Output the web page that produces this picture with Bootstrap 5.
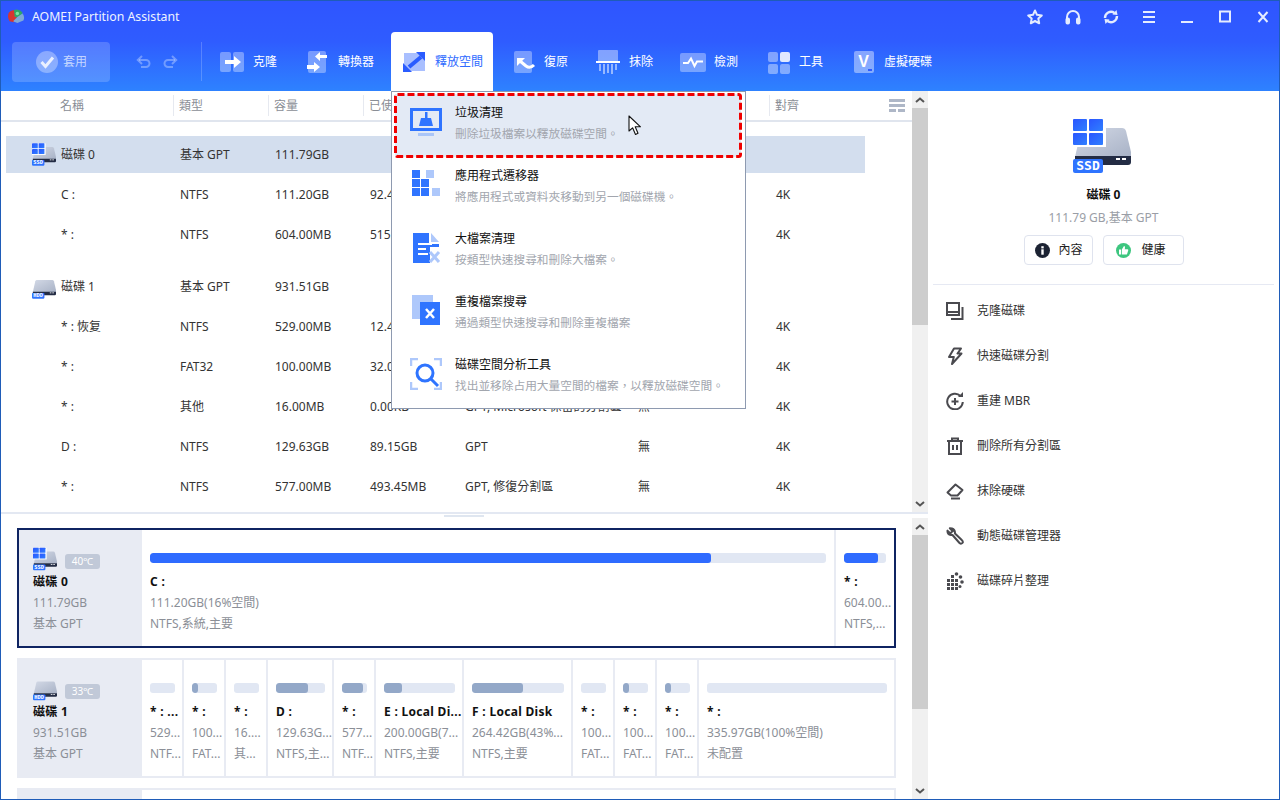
<!DOCTYPE html>
<html lang="zh-Hant">
<head>
<meta charset="utf-8">
<title>AOMEI Partition Assistant</title>
<link rel="stylesheet" href="https://cdn.jsdelivr.net/npm/bootstrap@5.3.0/dist/css/bootstrap.min.css">
<style>
html,body{margin:0;width:1280px;height:800px;overflow:hidden;background:#fff}
body{font-family:"Noto Sans","Noto Sans CJK TC",sans-serif;font-size:12px;line-height:20px;color:#333}
svg{display:block;flex:none}
.win{width:1280px;height:800px;border:1px solid #1f5cb8;overflow:hidden;position:relative}
.head{height:90px;background:linear-gradient(180deg,#2f55ff 0%,#2f5cff 45%,#2e82ff 100%);color:#fff}
.titlebar{height:31px}
.applogo{margin-left:6px}
.apptitle{margin-left:6px;color:#eef3ff;font-size:12.3px}
.winbtns{gap:20px;padding-right:7px}
.toolbar{height:59px}
.applybtn{width:98px;height:40px;margin-left:11px;background:rgba(255,255,255,.18);border-radius:4px;padding-left:24px;color:rgba(255,255,255,.68);gap:5px}
.undo{margin-left:26px;gap:12px}
.vsep{width:1px;height:39px;margin-left:23px;margin-right:18px;background:rgba(255,255,255,.2)}
.titem{height:100%;white-space:nowrap;color:#fff}
.w86{width:86px}.w85{width:85px}.w82{width:82px}.w84{width:84px}.w88{width:88px}
.tabon{width:102px;padding-left:11px;background:#fff;color:#2f6bff;border-radius:4px 4px 0 0;margin-right:21px}
.mainwrap{height:708px}
.leftcol{width:927px}
.toppane{height:423px;border-bottom:2px solid #e3e8f2}
.tablearea{width:911px;overflow:hidden}
.thead-row,.trow{display:grid;grid-template-columns:172px 95px 95px 95px 173px 138px 95px}
.thead-row{height:31px;border-bottom:2px solid #e0e5ee;margin-bottom:14px;color:#8a8e96;width:911px;grid-template-columns:172px 95px 95px 95px 173px 138px 95px 48px}
.thead-row>div{height:21px;margin-top:4px;border-left:1px solid #e6e9f0;padding-left:5px;white-space:nowrap;line-height:21px}
.thead-row>div:first-child{border-left:0;padding-left:59px}
.thead-row>div.tblicon{border-left:0;padding-left:25px}
.trow{height:40px;align-items:center}
.trow>div{padding-left:7px;white-space:nowrap}
.trow>div:first-child{padding-left:60px}
.trow.diskrow>div:first-child{padding-left:31px;display:flex;align-items:center;gap:5px}
.trow.sel{height:37px;margin-bottom:2px;margin-left:5px;width:859px;background:#d3deee;grid-template-columns:167px 95px 95px 95px 173px 138px 95px}
.trow.sel>div:first-child{padding-left:26px}
.gaptop{margin-top:12px}
.sbar{width:16px;background:#f0f0f0}
.sbar .arr{height:17px}
.sbar .thumb{background:#cdcdcd}
.th1{height:217px}
.th2{height:174px}
.grabber{width:40px;height:2px;margin:1px 0 11px 443px;background:#dfe6f0}
.bottompane{height:285px}
.disklist{width:911px;overflow:hidden;height:285px}
.dk{width:879px;height:120px;margin:0 0 10px 16px;border:2px solid #e8ebf3;background:#e8ebf3;gap:2px}
.dk.cur-disk{border-color:#0f2462}
.dkleft{width:121px;flex:none;padding:17px 0 0 14px;line-height:21px;color:#8b8f97}
.dkname{font-weight:700;color:#111;letter-spacing:.3px}
.tempb{width:35px;height:15px;margin:7px 0 0 8px;background:#c1c9d8;color:#fff;border-radius:3px;font-size:10px;line-height:15px;text-align:center}
.pcell{background:#fff;padding:23px 0 0 8px;line-height:21px;color:#8b8f97;min-width:0;flex:none;white-space:nowrap;overflow:hidden}
.pbar{height:10px;margin:0 7px 8px 0;background:#e1e7f3;border-radius:3px;overflow:hidden}
.cur-disk .pbar{margin-right:8px}
.pfill{height:100%;background:#93a8c8;border-radius:3px}
.cur-disk .pfill{background:#2f6bff}
.pname{font-weight:700;color:#111;letter-spacing:.3px}
.sidepanel{width:351px}
.bigicon{margin:28px 0 0 145px}
.sname{margin-top:12px;font-weight:700;color:#111;text-align:center}
.ssub{margin-top:3px;color:#9a9ea6;text-align:center}
.sbtns{margin-top:7px;gap:10px}
.sbtn{height:30px;padding:0 0 0 10px;display:flex;align-items:center;gap:9px;font-size:12px;color:#222;background:#fff;border:1px solid #dfe3ee;border-radius:4px}
.sbtn.a{width:69px}
.sbtn.b{width:81px;padding-left:12px;gap:11px}
.sline{height:1px;margin:19px 5px 3px;background:#e6e9f3}
.actions .list-group-item{height:45px;padding:0 0 0 18px;display:flex;align-items:center;gap:13px;border:0;background:transparent;color:#333;font-size:12px}
.popmenu{top:90px;left:390px;width:355px;height:318px;min-width:0;padding:2px 0 0;margin:0;border:1px solid #8e9ab0;border-radius:0;background:#fff;z-index:5;font-size:12px}
.popmenu .dropdown-item{height:63px;width:346px;margin-left:3px;padding:9px 0 0 15px;gap:13px;position:relative;color:#111;white-space:nowrap}
.popmenu .dropdown-item.picked{background:#e3eaf5}
.popmenu svg.mi{margin-top:3px}
.msub{color:#a2a6ae;font-size:11.7px}
.dash{position:absolute;left:-1px;top:-1px}
.cursorpic{position:absolute;left:627px;top:114px;z-index:6}
</style>
</head>
<body>
<svg width="0" height="0" class="position-absolute">
<defs>
<linearGradient id="bodyg" x1="0" y1="0" x2="1" y2="1"><stop offset="0" stop-color="#d3d9e6"/><stop offset="1" stop-color="#a8b2c6"/></linearGradient>
<linearGradient id="wing" x1="0" y1="0" x2="1" y2="1"><stop offset="0" stop-color="#2a55ff"/><stop offset="1" stop-color="#2f80ff"/></linearGradient>
<symbol id="ssd" viewBox="0 0 58 54">
<path d="M2 38 8 12Q9 9 12 9H49Q52 9 53 12L58 33V38Z" fill="url(#bodyg)"/>
<path d="M2 37H58V43Q58 46 55 46H2Z" fill="#232c44"/>
<rect x="43" y="39" width="4" height="2" fill="#fff"/><rect x="49" y="39" width="4" height="2" fill="#fff"/>
<rect width="33" height="28" fill="#fff"/>
<rect width="14" height="12" rx="1" fill="url(#wing)"/><rect x="16" width="14" height="12" rx="1" fill="url(#wing)"/>
<rect y="14" width="14" height="12" rx="1" fill="url(#wing)"/><rect x="16" y="14" width="14" height="12" rx="1" fill="url(#wing)"/>
<rect y="40" width="30" height="14" rx="2" fill="#2f74ff"/>
<text x="15" y="51" text-anchor="middle" font-family="'DejaVu Sans Mono',monospace" font-weight="700" font-size="13" fill="#fff">SSD</text>
</symbol>
<symbol id="hdd" viewBox="0 0 58 54">
<path d="M2 38 8 12Q9 9 12 9H49Q52 9 53 12L58 33V38Z" fill="url(#bodyg)"/>
<path d="M2 37H58V43Q58 46 55 46H2Z" fill="#232c44"/>
<rect x="43" y="39" width="4" height="2" fill="#fff"/><rect x="49" y="39" width="4" height="2" fill="#fff"/>
<rect y="40" width="30" height="14" rx="2" fill="#2f74ff"/>
<text x="15" y="51" text-anchor="middle" font-family="'DejaVu Sans Mono',monospace" font-weight="700" font-size="13" fill="#fff">HDD</text>
</symbol>
</defs>
</svg>

<div class="win d-flex flex-column">
  <header class="head flex-none">
    <div class="titlebar d-flex align-items-center justify-content-between">
      <div class="d-flex align-items-center">
        <svg class="applogo" width="19" height="16" viewBox="0 0 22 18"><path d="M2 4Q5 0 10 1L12 8 8 15 3 14Q0 9 2 4Z" fill="#d8362f"/><path d="M8 1Q14-1 18 4L15 9 9 9Z" fill="#2fa866"/><path d="M12 9 18 5Q21 9 19 13L12 16 7 14Z" fill="#7fa9d8"/><circle cx="12" cy="5" r="2" fill="#7ee0a0"/></svg>
        <span class="apptitle">AOMEI Partition Assistant</span>
      </div>
      <div class="winbtns d-flex align-items-center">
        <svg width="18" height="18" viewBox="0 0 18 18" fill="none" stroke="#e4ecff" stroke-width="2" stroke-linejoin="round"><path d="M9 2.5 11 6.8 15.8 7.4 12.3 10.6 13.2 15.3 9 13 4.8 15.3 5.7 10.6 2.2 7.4 7 6.8Z"/></svg>
        <svg width="18" height="18" viewBox="0 0 18 18" fill="none" stroke="#e4ecff" stroke-width="2"><path d="M3 12V9a6 6 0 0 1 12 0v3"/><rect x="2.5" y="10.5" width="2.5" height="5" rx="1" fill="#e4ecff"/><rect x="13" y="10.5" width="2.5" height="5" rx="1" fill="#e4ecff"/></svg>
        <svg width="18" height="18" viewBox="0 0 18 18" fill="none" stroke="#e4ecff" stroke-width="2.4"><path d="M3 10a6 6 0 0 1 9.5-5"/><path d="M15 8a6 6 0 0 1-9.5 5"/><path d="M10.500 6.500 15.500 7 14.500 2Z" fill="#e4ecff" stroke="none"/><path d="M7.500 11.500 2.500 11 3.500 16Z" fill="#e4ecff" stroke="none"/></svg>
        <svg width="18" height="18" viewBox="0 0 18 18" stroke="#e4ecff" stroke-width="2"><path d="M3 4h12M3 9h12M3 14h12"/></svg>
        <svg width="18" height="18" viewBox="0 0 18 18" stroke="#e4ecff" stroke-width="2"><path d="M3 14h12"/></svg>
        <svg width="18" height="18" viewBox="0 0 18 18" fill="none" stroke="#e4ecff" stroke-width="2"><rect x="4" y="3.500" width="10" height="10"/></svg>
        <svg width="18" height="18" viewBox="0 0 18 18" stroke="#e4ecff" stroke-width="2"><path d="M4.500 4 13.500 14M13.500 4 4.500 14"/></svg>
      </div>
    </div>
    <div class="toolbar d-flex align-items-center">
      <div class="applybtn d-flex align-items-center">
        <svg width="22" height="22" viewBox="0 0 22 22"><circle cx="11" cy="11" r="11" fill="rgba(255,255,255,.32)"/><path d="M5.500 11 9.500 15.500 17 6.500" fill="none" stroke="#eaf0ff" stroke-width="3"/></svg>
        <span>套用</span>
      </div>
      <div class="undo d-flex align-items-center">
        <svg width="15" height="14" viewBox="0 0 15 14" fill="none" stroke="rgba(255,255,255,.32)" stroke-width="2"><path d="M3 5H10A3.500 3.500 0 0 1 10 12H5"/><path d="M6 1 1.800 5 6 9"/></svg>
        <svg width="15" height="14" viewBox="0 0 15 14" fill="none" stroke="rgba(255,255,255,.32)" stroke-width="2"><path d="M12 5H5A3.500 3.500 0 0 0 5 12H10"/><path d="M9 1 13.200 5 9 9"/></svg>
      </div>
      <div class="vsep"></div>

      <div class="titem w86 d-flex align-items-center">
        <svg width="33" height="24" viewBox="0 0 33 24"><rect y="2" width="11" height="20" rx="2" fill="rgba(255,255,255,.35)"/><rect x="13" y="2" width="11" height="20" rx="2" fill="rgba(255,255,255,.35)"/><path d="M5 10h9V6l7 6-7 6v-4H5z" fill="#fff"/></svg>
        <span>克隆</span>
      </div>
      <div class="titem w85 d-flex align-items-center">
        <svg width="32" height="24" viewBox="0 0 32 24"><rect x="2" y="1" width="18" height="22" rx="2" fill="rgba(255,255,255,.35)"/><path d="M21 5H14V2L9 6.500 14 11V8H21z" fill="#fff"/><path d="M1 15H8V12L14 17 8 22V19H1z" fill="#fff"/></svg>
        <span>轉換器</span>
      </div>
      <div class="titem tabon d-flex align-items-center">
        <svg width="33" height="24" viewBox="0 0 33 24"><path d="M2 3H23V21H2Z" fill="#a9bfff"/><path d="M7 17 19 7" stroke="#2a5cff" stroke-width="4"/><path d="M14 2h9v9z" fill="#2a5cff"/><path d="M1 13v9h9z" fill="#2a5cff"/></svg>
        <span>釋放空間</span>
      </div>
      <div class="titem w82 d-flex align-items-center">
        <svg width="30" height="24" viewBox="0 0 30 24"><rect y="1" width="18" height="22" rx="2" fill="rgba(255,255,255,.35)"/><path d="M3 8h8l-8 8z" fill="#fff"/><path d="M6 11 12 16Q16 19 20 15" fill="none" stroke="#fff" stroke-width="3"/></svg>
        <span>復原</span>
      </div>
      <div class="titem w84 d-flex align-items-center">
        <svg width="33" height="24" viewBox="0 0 33 24"><rect x="2" y="0" width="20" height="12" rx="1" fill="rgba(255,255,255,.4)"/><rect y="11" width="24" height="2" fill="#fff"/><path d="M4 14V21M8 14V24M12 14V23M16 14V24M20 14V20" stroke="rgba(255,255,255,.5)" stroke-width="2"/></svg>
        <span>抹除</span>
      </div>
      <div class="titem w88 d-flex align-items-center">
        <svg width="34" height="24" viewBox="0 0 34 24"><rect y="3" width="26" height="19" rx="2" fill="rgba(255,255,255,.35)"/><path d="M3 13H8L11 8.500 14.500 16 17 11.500H23" fill="none" stroke="#fff" stroke-width="2"/></svg>
        <span>檢測</span>
      </div>
      <div class="titem w86 d-flex align-items-center">
        <svg width="31" height="24" viewBox="0 0 31 24"><rect y="2" width="10" height="10" rx="2" fill="rgba(255,255,255,.4)"/><rect x="12" y="2" width="10" height="10" rx="2" fill="rgba(255,255,255,.85)"/><rect y="14" width="10" height="10" rx="2" fill="rgba(255,255,255,.4)"/><rect x="12" y="14" width="10" height="10" rx="2" fill="rgba(255,255,255,.4)"/></svg>
        <span>工具</span>
      </div>
      <div class="titem d-flex align-items-center">
        <svg width="30" height="24" viewBox="0 0 30 24"><rect y="1" width="20" height="22" rx="2" fill="rgba(255,255,255,.42)"/><text x="9.500" y="17" text-anchor="middle" font-family="'Liberation Sans',sans-serif" font-weight="700" font-size="16" fill="#fff">V</text><rect x="14" y="19" width="4" height="2" fill="#2f5cff"/></svg>
        <span>虛擬硬碟</span>
      </div>
    </div>
  </header>

  <div class="mainwrap d-flex">
    <div class="leftcol d-flex flex-column">
      <section class="toppane d-flex flex-none">
        <div class="tablearea flex-none">
          <div class="thead-row">
            <div>名稱</div><div>類型</div><div>容量</div><div>已使</div><div></div><div></div><div>對齊</div>
            <div class="tblicon d-flex align-items-center"><svg width="16" height="13" viewBox="0 0 16 13" fill="#aeb7c7"><rect width="16" height="3"/><rect y="5" width="16" height="3"/><rect y="10" width="7" height="3"/><rect x="9" y="10" width="7" height="3"/></svg></div>
          </div>
          <div class="trow diskrow sel"><div><svg width="24" height="23"><use href="#ssd"/></svg><span>磁碟 0</span></div><div>基本 GPT</div><div>111.79GB</div></div>
          <div class="trow"><div>C :</div><div>NTFS</div><div>111.20GB</div><div>92.45GB</div><div></div><div></div><div>4K</div></div>
          <div class="trow"><div>* :</div><div>NTFS</div><div>604.00MB</div><div>515.32MB</div><div></div><div></div><div>4K</div></div>
          <div class="trow diskrow gaptop"><div><svg width="24" height="23"><use href="#hdd"/></svg><span>磁碟 1</span></div><div>基本 GPT</div><div>931.51GB</div></div>
          <div class="trow"><div>* : 恢复</div><div>NTFS</div><div>529.00MB</div><div>12.40MB</div><div></div><div></div><div>4K</div></div>
          <div class="trow"><div>* :</div><div>FAT32</div><div>100.00MB</div><div>32.00MB</div><div></div><div></div><div>4K</div></div>
          <div class="trow"><div>* :</div><div>其他</div><div>16.00MB</div><div>0.00KB</div><div>GPT, Microsoft 保留的分割區</div><div>無</div><div>4K</div></div>
          <div class="trow"><div>D :</div><div>NTFS</div><div>129.63GB</div><div>89.15GB</div><div>GPT</div><div>無</div><div>4K</div></div>
          <div class="trow"><div>* :</div><div>NTFS</div><div>577.00MB</div><div>493.45MB</div><div>GPT, 修復分割區</div><div>無</div><div>4K</div></div>
        </div>
        <div class="sbar d-flex flex-column flex-none">
          <div class="arr d-flex align-items-center justify-content-center"><svg width="10" height="6" viewBox="0 0 10 6" fill="none" stroke="#555" stroke-width="2"><path d="M1 5 5 1.500 9 5"/></svg></div>
          <div class="thumb th1"></div>
          <div class="flex-grow-1"></div>
          <div class="arr d-flex align-items-center justify-content-center"><svg width="10" height="6" viewBox="0 0 10 6" fill="none" stroke="#555" stroke-width="2"><path d="M1 1 5 4.500 9 1"/></svg></div>
        </div>
      </section>

      <section class="bottompane d-flex flex-none">
        <div class="disklist flex-none">
          <div class="grabber"></div>
          <div class="dk cur-disk d-flex">
            <div class="dkleft">
              <div class="d-flex"><svg width="24" height="24"><use href="#ssd"/></svg><div class="tempb">40℃</div></div>
              <div class="dkname">磁碟 0</div><div>111.79GB</div><div>基本 GPT</div>
            </div>
            <div class="pcell" style="width:692px"><div class="pbar"><div class="pfill" style="width:83%"></div></div><div class="pname">C :</div><div>111.20GB(16%空間)</div><div>NTFS,系統,主要</div></div>
            <div class="pcell" style="width:58px"><div class="pbar"><div class="pfill" style="width:81%"></div></div><div class="pname">* :</div><div>604.00...</div><div>NTFS,...</div></div>
          </div>
          <div class="dk d-flex">
            <div class="dkleft">
              <div class="d-flex"><svg width="24" height="24"><use href="#hdd"/></svg><div class="tempb">33℃</div></div>
              <div class="dkname">磁碟 1</div><div>931.51GB</div><div>基本 GPT</div>
            </div>
            <div class="pcell" style="width:40px"><div class="pbar"></div><div class="pname">* : ...</div><div>529...</div><div>NTF...</div></div>
            <div class="pcell" style="width:40px"><div class="pbar"><div class="pfill" style="width:22%"></div></div><div class="pname">* :</div><div>100...</div><div>FAT...</div></div>
            <div class="pcell" style="width:40px"><div class="pbar"></div><div class="pname">* :</div><div>16....</div><div>其...</div></div>
            <div class="pcell" style="width:64px"><div class="pbar"><div class="pfill" style="width:66%"></div></div><div class="pname">D :</div><div>129.63G...</div><div>NTFS,主...</div></div>
            <div class="pcell" style="width:40px"><div class="pbar"><div class="pfill" style="width:83%"></div></div><div class="pname">* :</div><div>577...</div><div>NTF...</div></div>
            <div class="pcell" style="width:86px"><div class="pbar"><div class="pfill" style="width:25%"></div></div><div class="pname">E : Local Di...</div><div>200.00GB(7...</div><div>NTFS,主要</div></div>
            <div class="pcell" style="width:107px"><div class="pbar"><div class="pfill" style="width:55%"></div></div><div class="pname">F : Local Disk</div><div>264.42GB(43%...</div><div>NTFS,主要</div></div>
            <div class="pcell" style="width:40px"><div class="pbar"></div><div class="pname">* :</div><div>100...</div><div>FAT...</div></div>
            <div class="pcell" style="width:40px"><div class="pbar"><div class="pfill" style="width:22%"></div></div><div class="pname">* :</div><div>100...</div><div>FAT...</div></div>
            <div class="pcell" style="width:40px"><div class="pbar"><div class="pfill" style="width:22%"></div></div><div class="pname">* :</div><div>100...</div><div>FAT...</div></div>
            <div class="pcell" style="width:195px"><div class="pbar"></div><div class="pname">* :</div><div>335.97GB(100%空間)</div><div>未配置</div></div>
          </div>
          <div class="dk d-flex">
            <div class="dkleft"></div>
            <div class="pcell flex-grow-1"></div>
          </div>
        </div>
        <div class="sbar d-flex flex-column flex-none mt-1">
          <div class="arr d-flex align-items-center justify-content-center"><svg width="10" height="6" viewBox="0 0 10 6" fill="none" stroke="#555" stroke-width="2"><path d="M1 5 5 1.500 9 5"/></svg></div>
          <div class="thumb th2"></div>
          <div class="flex-grow-1"></div>
          <div class="arr d-flex align-items-center justify-content-center"><svg width="10" height="6" viewBox="0 0 10 6" fill="none" stroke="#555" stroke-width="2"><path d="M1 1 5 4.500 9 1"/></svg></div>
        </div>
      </section>
    </div>

    <aside class="sidepanel flex-none">
      <svg class="bigicon" width="58" height="54"><use href="#ssd"/></svg>
      <div class="sname">磁碟 0</div>
      <div class="ssub">111.79 GB,基本 GPT</div>
      <div class="sbtns d-flex justify-content-center">
        <button type="button" class="btn sbtn a"><svg width="15" height="15" viewBox="0 0 15 15"><circle cx="7.500" cy="7.500" r="7.500" fill="#1c2333"/><rect x="6.300" y="6.300" width="2.400" height="5.400" fill="#fff"/><rect x="6.300" y="3.200" width="2.400" height="2.200" fill="#fff"/></svg>內容</button>
        <button type="button" class="btn sbtn b"><svg width="15" height="15" viewBox="0 0 15 15"><circle cx="7.500" cy="7.500" r="7.500" fill="#3dc67f"/><rect x="3" y="6.500" width="2" height="5" fill="#fff"/><path d="M5.800 6.500 8 3Q9.300 3.200 9 5L8.700 6.200H11.600Q12.600 6.500 12.200 7.600L11 11.200Q10.800 11.600 10.200 11.600H5.800Z" fill="#fff"/></svg>健康</button>
      </div>
      <div class="sline"></div>
      <ul class="list-group list-group-flush actions">
        <li class="list-group-item"><svg width="18" height="18" viewBox="0 0 18 18" fill="none" stroke="#4a4a4f" stroke-width="2"><rect x="1" y="1" width="12" height="12"/><path d="M1 10h12"/><path d="M16.500 5v12H5"/></svg>克隆磁碟</li>
        <li class="list-group-item"><svg width="18" height="18" viewBox="0 0 18 18" fill="none" stroke="#4a4a4f" stroke-width="2" stroke-linejoin="round"><path d="M8 1.500H15L11.500 6.500H15.500L6 17 7.800 10H3Z"/></svg>快速磁碟分割</li>
        <li class="list-group-item"><svg width="18" height="18" viewBox="0 0 18 18" fill="none" stroke="#4a4a4f" stroke-width="2"><path d="M14.500 4A7.800 7.800 0 1 0 16.800 10"/><path d="M5.500 9.500h7M9 6v7"/><path d="M12 5h5V0Z" fill="#4a4a4f" stroke="none"/></svg>重建 MBR</li>
        <li class="list-group-item"><svg width="18" height="18" viewBox="0 0 18 18" fill="none" stroke="#4a4a4f" stroke-width="2"><path d="M1 4h16M6 4V1.500h6V4"/><path d="M3 4v13h12V4"/><path d="M7 8v5M11 8v5"/></svg>刪除所有分割區</li>
        <li class="list-group-item"><svg width="18" height="18" viewBox="0 0 18 18" fill="none" stroke="#4a4a4f" stroke-width="2" stroke-linejoin="round"><path d="M1.500 10.500 9.500 2.500 16.500 8 11.500 13.500H5Z"/><path d="M5 16.500H14"/></svg>抹除硬碟</li>
        <li class="list-group-item"><svg width="18" height="18" viewBox="0 0 18 18" fill="none" stroke="#4a4a4f" stroke-width="2" stroke-linejoin="round"><path d="M6 1.500 3.800 1.200 6.600 4 4.400 6.400 1.500 3.600Q1.200 7.200 5 8L6.500 8 13.500 16Q15.500 17.500 16.800 15.500 17 14 16 13.200L9 6.500Q9.200 2.500 6 1.500Z"/></svg>動態磁碟管理器</li>
        <li class="list-group-item"><svg width="18" height="18" viewBox="0 0 18 18" fill="#4a4a4f"><rect x="1" y="7" width="3" height="3"/><rect x="5" y="7" width="3" height="3"/><rect x="9" y="7" width="3" height="3"/><rect x="1" y="11" width="3" height="3"/><rect x="5" y="11" width="3" height="3"/><rect x="9" y="11" width="3" height="3"/><rect x="1" y="15" width="3" height="3"/><rect x="5" y="15" width="3" height="3"/><rect x="9" y="15" width="3" height="3"/><rect x="5" y="3" width="3" height="3"/><circle cx="10.500" cy="2" r="1.800"/><circle cx="14.500" cy="5" r="1.800"/><circle cx="16" cy="10" r="1.800"/><circle cx="14" cy="14.500" r="1.500"/></svg>磁碟碎片整理</li>
      </ul>
    </aside>
  </div>

  <div class="dropdown-menu show d-block position-absolute popmenu">
    <a class="dropdown-item picked d-flex" href="#">
      <svg class="mi" width="32" height="32" viewBox="0 0 32 32"><rect x="1.500" y="3.500" width="29" height="20" fill="none" stroke="#2f74ff" stroke-width="3"/><rect x="8" y="27" width="16" height="3" fill="#aac6f8"/><path d="M15 6h2.500V12H21L23 20H9L11 12H15Z" fill="#2f74ff"/></svg>
      <div><div>垃圾清理</div><div class="msub">刪除垃圾檔案以釋放磁碟空間。</div></div>
      <svg class="dash" width="348" height="65" viewBox="0 0 348 65"><rect x="1.500" y="1.500" width="345" height="62" rx="2" fill="none" stroke="#f00000" stroke-width="3" stroke-dasharray="7 3"/></svg>
    </a>
    <a class="dropdown-item d-flex" href="#">
      <svg class="mi" width="32" height="32" viewBox="0 0 32 32"><g fill="#2f74ff"><rect x="2" y="1" width="8" height="8"/><rect x="2" y="10" width="8" height="8"/><rect x="11" y="10" width="8" height="8"/><rect x="2" y="19" width="8" height="8"/><rect x="11" y="19" width="8" height="8"/></g><rect x="16" y="1" width="8" height="8" fill="#aec8fb"/><rect x="22" y="19" width="8" height="8" fill="#aec8fb"/></svg>
      <div><div>應用程式遷移器</div><div class="msub">將應用程式或資料夾移動到另一個磁碟機。</div></div>
    </a>
    <a class="dropdown-item d-flex" href="#">
      <svg class="mi" width="32" height="32" viewBox="0 0 32 32"><path d="M3 1H19V12H29V15H20V31H3Z" fill="#2f74ff"/><path d="M21 1 29 10H21Z" fill="#aec8fb"/><path d="M8 12H22M8 17H16M8 22H18" stroke="#fff" stroke-width="2"/><path d="M20 20 29 30M29 20 20 30" stroke="#aec8fb" stroke-width="3"/></svg>
      <div><div>大檔案清理</div><div class="msub">按類型快速搜尋和刪除大檔案。</div></div>
    </a>
    <a class="dropdown-item d-flex" href="#">
      <svg class="mi" width="32" height="32" viewBox="0 0 32 32"><rect x="2" y="0" width="21" height="24" fill="#aec8fb"/><rect x="10" y="7" width="20" height="23" fill="#2f74ff"/><path d="M16 14 24 23M24 14 16 23" stroke="#fff" stroke-width="2.500"/></svg>
      <div><div>重複檔案搜尋</div><div class="msub">通過類型快速搜尋和刪除重複檔案</div></div>
    </a>
    <a class="dropdown-item d-flex" href="#">
      <svg class="mi" width="32" height="32" viewBox="0 0 32 32"><path d="M8 1H1V8M24 1H31V8M1 24V31H8M31 24V31H24" fill="none" stroke="#aec8fb" stroke-width="2.500"/><circle cx="15" cy="15" r="8" fill="none" stroke="#2f74ff" stroke-width="3"/><path d="M21 21 28 28" stroke="#2f74ff" stroke-width="3"/></svg>
      <div><div>磁碟空間分析工具</div><div class="msub">找出並移除占用大量空間的檔案，以釋放磁碟空間。</div></div>
    </a>
  </div>

  <svg class="cursorpic" width="14" height="21" viewBox="0 0 14 21"><path d="M1 1V16L4.600 12.800 7.500 19.500 10 18.300 7.200 11.800H12.500Z" fill="#fff" stroke="#111" stroke-width="1.100" stroke-linejoin="round"/></svg>
</div>
</body>
</html>
